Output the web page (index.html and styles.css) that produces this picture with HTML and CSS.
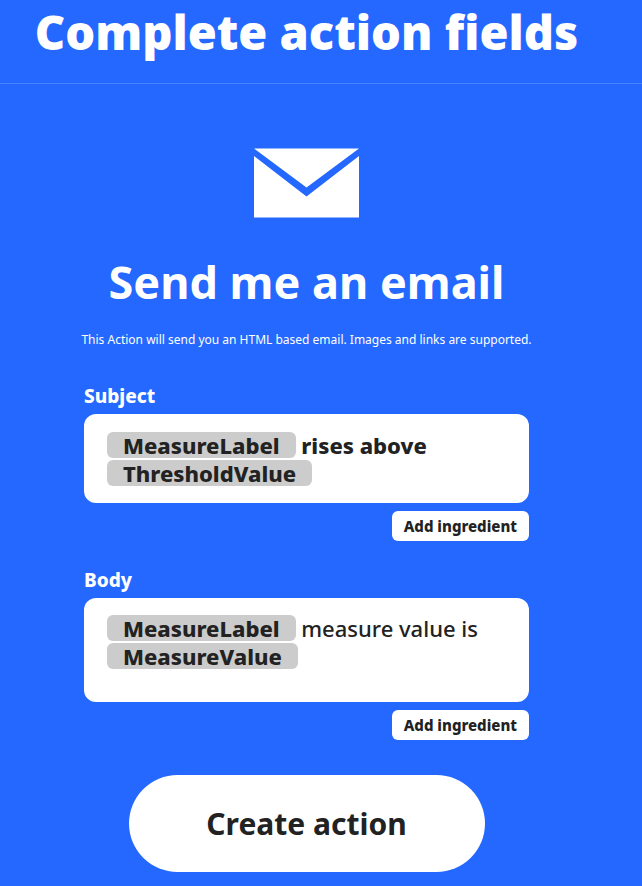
FILE: index.html
```html
<!DOCTYPE html>
<html lang="en">
<head>
<meta charset="utf-8">
<meta name="viewport" content="width=device-width, initial-scale=1">
<title>Complete action fields</title>
<link rel="stylesheet" href="styles.css">
</head>
<body>
<header class="page-header">
  <h1 class="page-title">Complete action fields</h1>
</header>
<main class="content">
  <svg class="service-icon" viewBox="0 0 105 70" aria-hidden="true">
    <path fill="#fff" d="M0 .5H105L52.500 39.500Z"/>
    <path fill="#fff" d="M0 8L52.500 48.500L105 8V69.500H0Z"/>
  </svg>
  <h2 class="action-title">Send me an email</h2>
  <form class="action-form">
    <p class="description">This Action will send you an HTML based email. Images and links are supported.</p>
    <section class="field">
      <label class="label" id="subject-label">Subject</label>
      <div class="editor strong" contenteditable="true" role="textbox" aria-labelledby="subject-label" spellcheck="false"><span class="chip">MeasureLabel</span> rises above <span class="chip">ThresholdValue</span></div>
      <button class="add" type="button">Add ingredient</button>
    </section>
    <section class="field">
      <label class="label" id="body-label">Body</label>
      <div class="editor multiline" contenteditable="true" role="textbox" aria-multiline="true" aria-labelledby="body-label" spellcheck="false"><span class="chip">MeasureLabel</span> measure value is <span class="chip">MeasureValue</span></div>
      <button class="add" type="button">Add ingredient</button>
    </section>
    <button class="submit" type="submit">Create action</button>
  </form>
</main>
</body>
</html>
```
FILE: styles.css
```css
* {
  box-sizing: border-box;
}

body {
  margin: 0;
  background: #2468ff;
  color: #fff;
  font-family: "Noto Sans", "Liberation Sans", sans-serif;
}

.page-header {
  padding: 0 29px 19px 0;
  border-bottom: 1px solid #4a82ff;
  text-align: center;
}

.page-title,
.action-title {
  margin: 0;
  font-size: 47px;
  font-weight: 900;
  line-height: 64px;
}

.action-title {
  margin: 32px 0 16px;
  font-size: 45px;
  font-weight: 700;
}

.content {
  display: flex;
  flex-direction: column;
  align-items: center;
  padding: 64px 29px 12px 0;
}

.service-icon {
  width: 105px;
  height: 70px;
}

.action-form {
  display: flex;
  flex-direction: column;
  width: 100%;
  max-width: 445px;
}

.description {
  margin: 0 -4px 32px;
  font-size: 12px;
  line-height: 20px;
  text-align: center;
}

.field {
  display: flex;
  flex-direction: column;
  margin-bottom: 25px;
}

.label {
  margin-bottom: 4px;
  font-size: 19px;
  font-weight: 800;
  line-height: 28px;
}

.editor {
  min-height: 89px;
  padding: 16px 23px;
  border-radius: 12px;
  background: #fff;
  color: #222;
  font-size: 22px;
  font-weight: 500;
  line-height: 28px;
}

.strong {
  padding-top: 17px;
  font-weight: 800;
}

.multiline {
  min-height: 104px;
}

.chip {
  display: inline-block;
  margin: 1px 0;
  padding: 0 16px;
  border-radius: 6px;
  background: #ccc;
  font-weight: 800;
  line-height: 26px;
  vertical-align: top;
}

button {
  border: 0;
  background: #fff;
  color: #222;
  font-family: inherit;
  font-weight: 700;
  cursor: pointer;
}

.add {
  align-self: flex-end;
  margin-top: 8px;
  padding: 0 12px;
  border-radius: 6px;
  font-size: 15px;
  font-weight: 800;
  line-height: 30px;
}

.submit {
  align-self: center;
  width: 80%;
  margin-top: 10px;
  border-radius: 50px;
  font-size: 30px;
  line-height: 95px;
}
```
